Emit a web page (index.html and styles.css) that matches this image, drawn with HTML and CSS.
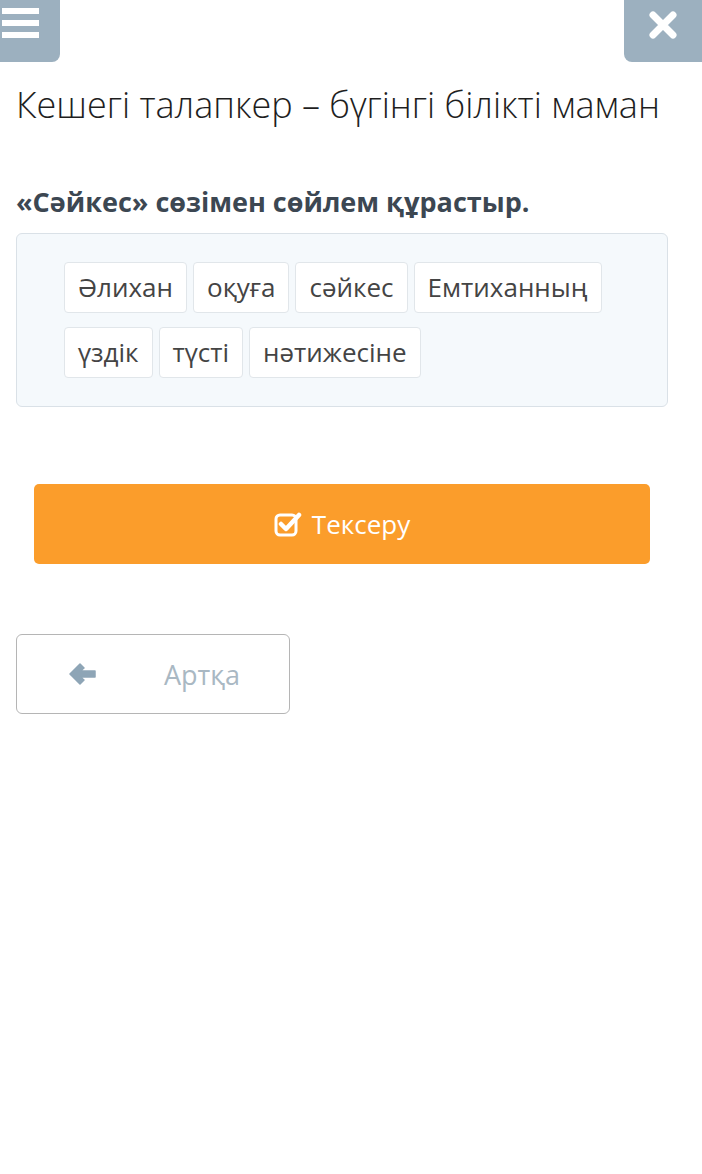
FILE: index.html
```html
<!DOCTYPE html>
<html lang="kk">
<head>
    <meta charset="UTF-8">
    <meta name="viewport" content="width=device-width, initial-scale=1.0">
    <title>Кешегі талапкер – бүгінгі білікті маман</title>
    <link rel="stylesheet" href="styles.css">
</head>
<body>

    <div class="topbar">
        <button class="corner-btn menu-btn" aria-label="Мәзір">
            <svg width="40" height="40" viewBox="0 0 40 40">
                <rect x="2" y="8" width="37" height="6" fill="#fff"/>
                <rect x="2" y="20" width="37" height="6" fill="#fff"/>
                <rect x="2" y="32" width="37" height="6" fill="#fff"/>
            </svg>
        </button>
        <button class="corner-btn close-btn" aria-label="Жабу">
            <svg width="30" height="30" viewBox="0 0 30 30">
                <path d="M5 5 L25 25 M25 5 L5 25" stroke="#fff" stroke-width="7" stroke-linecap="round"/>
            </svg>
        </button>
    </div>

    <div class="container">
        <h1>Кешегі талапкер – бүгінгі білікті маман</h1>
        <h2>«Сәйкес» сөзімен сөйлем құрастыр.</h2>

        <div class="words-box">
            <div class="words">
                <span class="word">Әлихан</span>
                <span class="word">оқуға</span>
                <span class="word">сәйкес</span>
                <span class="word">Емтиханның</span>
                <span class="word">үздік</span>
                <span class="word">түсті</span>
                <span class="word">нәтижесіне</span>
            </div>
        </div>

        <button class="check-btn">
            <svg width="28" height="26" viewBox="0 0 28 26">
                <rect x="2" y="4" width="20" height="20" rx="4" fill="none" stroke="#fff" stroke-width="3"/>
                <path d="M7 13 L12 18 L25 4" fill="none" stroke="#fff" stroke-width="4.5" stroke-linecap="round" stroke-linejoin="round"/>
            </svg>
            Тексеру
        </button>

        <button class="back-btn">
            <svg width="28" height="22" viewBox="0 0 28 22">
                <path d="M11 1 L1 11 L11 21 L15 17 L11.5 14 L26 14 L26 8 L11.5 8 L15 5 Z" fill="#8ea5b6" stroke="#8ea5b6" stroke-width="1.5" stroke-linejoin="round"/>
            </svg>
            <span>Артқа</span>
        </button>
    </div>

</body>
</html>
```

FILE: styles.css
```css
body {
    font-family: 'Open Sans', 'Noto Sans', sans-serif;
    background-color: #fff;
    margin: 0;
    padding: 0;
    color: #222;
}

.topbar {
    display: flex;
    justify-content: space-between;
    height: 62px;
}

.corner-btn {
    background-color: #9cb0bf;
    border: none;
    padding: 0;
    height: 62px;
    display: flex;
    align-items: center;
    justify-content: center;
}

.menu-btn {
    width: 60px;
    border-radius: 0 0 8px 0;
    justify-content: flex-start;
    align-items: flex-start;
}

.close-btn {
    width: 78px;
    border-radius: 0 0 0 8px;
    padding-bottom: 12px;
}

.container {
    padding: 0 16px;
}

h1 {
    font-size: 36px;
    font-weight: 300;
    margin: 21px 0 0;
    line-height: 44px;
    color: #1e1e1e;
    white-space: nowrap;
}

h2 {
    font-size: 27px;
    font-weight: 700;
    color: #3c4752;
    margin: 57px 0 0;
    line-height: 36px;
}

.words-box {
    margin: 13px 18px 0 0;
    background-color: #f5f9fc;
    border: 1px solid #dae1e7;
    border-radius: 6px;
    padding: 28px 47px;
}

.words {
    display: flex;
    flex-wrap: wrap;
    gap: 14px 6px;
}

.word {
    background-color: #fff;
    border: 1px solid #e1e6ea;
    border-radius: 4px;
    font-size: 26px;
    color: #444;
    padding: 0 13px;
    height: 49px;
    line-height: 49px;
}

.check-btn {
    display: flex;
    align-items: center;
    justify-content: center;
    gap: 10px;
    width: 616px;
    height: 80px;
    margin: 77px 0 0 18px;
    background-color: #fb9d2b;
    color: #fff;
    font-family: 'Open Sans', 'Noto Sans', sans-serif;
    font-size: 26px;
    border: none;
    border-radius: 5px;
}

.back-btn {
    display: flex;
    align-items: center;
    width: 274px;
    height: 80px;
    margin-top: 70px;
    padding: 0 0 0 52px;
    background-color: #fff;
    border: 1px solid #b5b5b5;
    border-radius: 6px;
    font-family: 'Open Sans', 'Noto Sans', sans-serif;
    font-size: 27px;
    color: #a9b8c3;
}

.back-btn span {
    margin-left: 67px;
}
```
